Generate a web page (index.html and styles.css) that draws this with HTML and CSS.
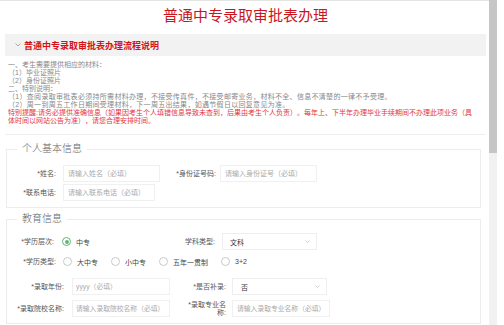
FILE: index.html
```html
<!DOCTYPE html>
<html lang="zh-CN">
<head>
    <meta charset="UTF-8">
    <meta name="viewport" content="width=device-width, initial-scale=1.0">
    <title>普通中专录取审批表办理</title>
    <link rel="stylesheet" href="styles.css">
</head>
<body>
    <div class="screen">
        <div class="page">
            <h1 class="page-title">普通中专录取审批表办理</h1>

            <div class="collapse">
                <h2 class="collapse-title">
                    <svg class="collapse-icon" width="6" height="4" viewBox="0 0 6 4"><polyline points="0.5,0.5 3,3 5.5,0.5" fill="none" stroke="#999" stroke-width="0.8"/></svg>
                    普通中专录取审批表办理流程说明
                </h2>
                <div class="collapse-body">
                    <p>一、考生需要提供相应的材料：</p>
                    <p>（1）毕业证照片</p>
                    <p>（2）身份证照片</p>
                    <p>二、特别说明：</p>
                    <p class="wide">（1）查阅录取审批表必须持所需材料办理，不接受传真件，不接受邮寄业务，材料不全、信息不清楚的一律不予受理。</p>
                    <p class="wide">（2）周一到周五工作日期间受理材料，下一周五出结果，如遇节假日以回复意见为准。</p>
                    <p class="notice">特别提醒:请务必提供准确信息（如果因考生个人填错信息导致未查到，后果由考生个人负责）。每年上、下半年办理毕业手续期间不办理此项业务（具<br>体时间以网站公告为准），请您合理安排时间。</p>
                </div>
            </div>

            <form class="apply-form">
                <fieldset class="field-group">
                    <legend>个人基本信息</legend>
                    <div class="form-row">
                        <label class="form-label">*姓名:</label>
                        <input class="form-input" type="text" placeholder="请输入姓名（必填）">
                        <label class="form-label form-label--mid">*身份证号码:</label>
                        <input class="form-input" type="text" placeholder="请输入身份证号（必填）">
                    </div>
                    <div class="form-row">
                        <label class="form-label">*联系电话:</label>
                        <input class="form-input form-input--short" type="text" placeholder="请输入联系电话（必填）">
                    </div>
                </fieldset>

                <fieldset class="field-group field-group--edu">
                    <legend>教育信息</legend>
                    <div class="form-row">
                        <label class="form-label form-label--tight">*学历层次:</label>
                        <div class="radio-group radio-group--fixed">
                            <span class="radio radio--checked"><span class="radio-dot"></span>中专</span>
                        </div>
                        <label class="form-label form-label--side">学科类型:</label>
                        <div class="form-select">
                            <span>文科</span>
                            <svg width="5" height="3" viewBox="0 0 5 3"><polyline points="0.5,0.5 2.5,2.5 4.5,0.5" fill="none" stroke="#bbb" stroke-width="0.7"/></svg>
                        </div>
                    </div>
                    <div class="form-row form-row--radio">
                        <label class="form-label">*学历类型:</label>
                        <div class="radio-group">
                            <span class="radio"><span class="radio-dot"></span>大中专</span>
                            <span class="radio"><span class="radio-dot"></span>小中专</span>
                            <span class="radio"><span class="radio-dot"></span>五年一贯制</span>
                            <span class="radio"><span class="radio-dot"></span>3+2</span>
                        </div>
                    </div>
                    <div class="form-row form-row--loose">
                        <label class="form-label form-label--wide">*录取年份:</label>
                        <input class="form-input form-input--mid" type="text" placeholder="yyyy（必填）">
                        <label class="form-label form-label--narrow">*是否补录:</label>
                        <div class="form-select form-select--wide">
                            <span>否</span>
                            <svg width="5" height="3" viewBox="0 0 5 3"><polyline points="0.5,0.5 2.5,2.5 4.5,0.5" fill="none" stroke="#bbb" stroke-width="0.7"/></svg>
                        </div>
                    </div>
                    <div class="form-row form-row--tall">
                        <label class="form-label form-label--wide">*录取院校名称:</label>
                        <input class="form-input form-input--mid" type="text" placeholder="请输入录取院校名称（必填）">
                        <label class="form-label form-label--narrow">*录取专业名称:</label>
                        <input class="form-input form-input--wide" type="text" placeholder="请输入录取专业名称（必填）">
                    </div>
                </fieldset>
            </form>
        </div>
        <div class="scrollbar"><div class="scrollbar-thumb"></div></div>
    </div>
</body>
</html>
```

FILE: styles.css
```css
* {
    box-sizing: border-box;
}
body {
    margin: 0;
    font-family: "Liberation Sans", "Noto Sans CJK SC", sans-serif;
    text-spacing-trim: space-all;
    color: #666;
    background: #fff;
}
.screen {
    display: flex;
    height: 325px;
    overflow: hidden;
}
.page {
    width: 489px;
    flex-shrink: 0;
    padding: 0 3px 0 5px;
    border-top: 1px solid #e4e4e4;
}
.page-title {
    margin: 5px 0 8px;
    font-size: 15px;
    line-height: 20px;
    font-weight: normal;
    color: #c9161d;
    text-align: center;
}
.collapse-title {
    display: flex;
    align-items: center;
    height: 22px;
    margin: 0;
    padding-left: 10px;
    background: #f2f2f2;
    font-size: 9px;
    font-weight: bold;
    color: #d21219;
}
.collapse-icon {
    margin-right: 3px;
}
.collapse-body {
    padding: 5px 0 9px 3px;
    border-bottom: 1px solid #eee;
    font-size: 7px;
    line-height: 8px;
    color: #888;
}
.collapse-body p {
    margin: 0;
    white-space: nowrap;
}
.collapse-body .wide {
    letter-spacing: 0.3px;
}
.collapse-body .notice {
    color: #e5353d;
}
.field-group {
    margin: 8px 5px 0 1px;
    padding: 10px 0 6px;
    border: 1px solid #ececec;
    min-width: 0;
}
.field-group--edu {
    margin-top: 5px;
    padding-top: 8px;
}
.field-group legend {
    margin-left: 10px;
    padding: 0 5px;
    font-size: 10px;
    line-height: 12px;
    font-weight: 300;
    color: #666;
}
.form-row {
    display: flex;
    align-items: center;
    height: 17px;
    margin-top: 2px;
}
.field-group legend + .form-row {
    margin-top: 0;
}
.form-row--radio {
    margin-top: 3px;
}
.form-row--loose {
    margin-top: 8px;
}
.form-row--tall {
    margin-top: 5px;
}
.form-label {
    flex-shrink: 0;
    width: 49px;
    margin-right: 7px;
    text-align: right;
    font-size: 7px;
    line-height: 8px;
    color: #555;
}
.form-label--tight {
    width: 47px;
    margin-right: 8px;
}
.form-label--mid {
    width: 56px;
    margin-right: 4px;
}
.form-label--side {
    width: 53px;
    margin-right: 7px;
}
.form-label--wide {
    width: 57px;
    margin-right: 8px;
}
.form-label--narrow {
    width: 56px;
    padding-left: 12px;
    margin-right: 6px;
}
.form-input {
    flex-shrink: 0;
    width: 97px;
    height: 17px;
    padding: 0 4px;
    border: 1px solid #f0f0f0;
    font-family: inherit;
    font-size: 7px;
    color: #333;
    outline: none;
}
.form-input::placeholder {
    color: #aaa;
}
.form-input--short {
    width: 92px;
}
.form-input--mid,
.form-input--wide {
    width: 98px;
    padding: 0 1px 0 3px;
    font-size: 6.8px;
}
.form-input--wide {
    padding-left: 4px;
}
.form-select {
    display: flex;
    align-items: center;
    justify-content: space-between;
    flex-shrink: 0;
    width: 95px;
    height: 17px;
    padding: 0 6px 0 7px;
    border: 1px solid #eee;
    font-size: 7px;
    color: #333;
}
.form-select--wide {
    padding-left: 8px;
}
.radio-group {
    display: flex;
    align-items: center;
}
.radio-group--fixed {
    width: 100px;
}
.radio {
    display: flex;
    align-items: center;
    margin-right: 13px;
    font-size: 7px;
    color: #444;
}
.radio-dot {
    display: flex;
    align-items: center;
    justify-content: center;
    width: 9px;
    height: 9px;
    margin-right: 5px;
    border: 1px solid #c9c9c9;
    border-radius: 50%;
    background: #fff;
}
.radio--checked .radio-dot {
    border-color: #5fb878;
}
.radio--checked .radio-dot::after {
    content: "";
    width: 4px;
    height: 4px;
    border-radius: 50%;
    background: #5fb878;
}
.scrollbar {
    width: 8px;
    flex-shrink: 0;
    background: #f1f1f1;
}
.scrollbar-thumb {
    height: 153px;
    background: #c6c6c6;
}
```
